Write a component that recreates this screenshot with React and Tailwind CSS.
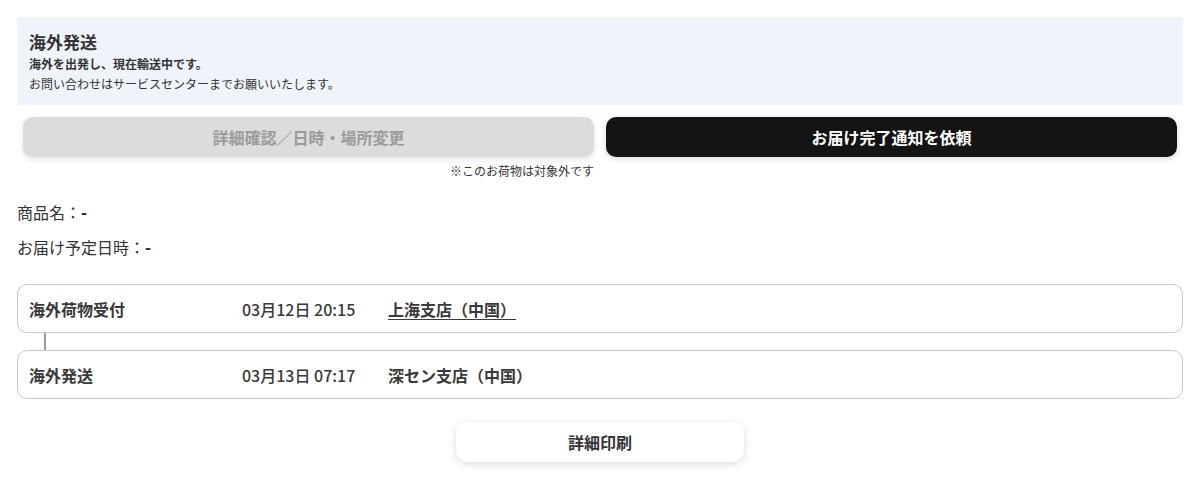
const font = { fontFamily: '"Noto Sans CJK JP", "Noto Sans", sans-serif' };

const events = [
    { label: "海外荷物受付", time: "03月12日 20:15", place: "上海支店（中国）", link: true },
    { label: "海外発送", time: "03月13日 07:17", place: "深セン支店（中国）", link: false },
];

const App = () => {
    return (
        <div className="w-[1200px] bg-white px-[17px] pt-[17px] text-[#333]" style={font}>
            <div className="bg-[#eff3fa] px-[12px] pt-[14px] pb-[12px]">
                <h2 className="text-[17px] font-bold leading-[22px]">海外発送</h2>
                <p className="mt-[2px] text-[12px] font-bold leading-[18px]">海外を出発し、現在輸送中です。</p>
                <p className="mt-[2px] text-[12px] leading-[18px]">お問い合わせはサービスセンターまでお願いいたします。</p>
            </div>

            <div className="mt-[12px] grid grid-cols-2 gap-[12px] px-[6px]">
                <div className="flex flex-col items-end">
                    <button className="h-[40px] w-full rounded-[10px] bg-[#dcdcdc] text-[16px] font-bold text-[#9b9b9b] shadow-[0_2px_6px_rgba(0,0,0,0.12)]">
                        詳細確認／日時・場所変更
                    </button>
                    <span className="mt-[6px] text-[12px] leading-[16px] text-[#333]">※このお荷物は対象外です</span>
                </div>
                <div>
                    <button className="h-[40px] w-full rounded-[10px] bg-[#141414] text-[16px] font-bold text-white shadow-[0_2px_6px_rgba(0,0,0,0.15)]">
                        お届け完了通知を依頼
                    </button>
                </div>
            </div>

            <div className="mt-[22px] flex flex-col gap-[13px] text-[16px] leading-[22px]">
                <p>商品名：<span className="font-black">-</span></p>
                <p>お届け予定日時：<span className="font-black">-</span></p>
            </div>

            <div className="mt-[26px] flex flex-col">
                {events.map((e, i) => (
                    <div key={i} className="flex flex-col">
                        {i > 0 && <div className="ml-[27px] h-[17px] w-[2px] bg-[#9a9a9a]" />}
                        <div className="flex h-[49px] items-center rounded-[10px] border border-[#c8c8c8] px-[11px] text-[16px] font-bold text-[#3a3a3a]">
                            <span className="w-[213px]">{e.label}</span>
                            <span className="w-[146px] font-medium">{e.time}</span>
                            <span className={e.link ? "underline underline-offset-[3px]" : ""}>{e.place}</span>
                        </div>
                    </div>
                ))}
            </div>

            <div className="mt-[23px] flex justify-center pb-[21px]">
                <button className="h-[40px] w-[288px] rounded-[12px] bg-white text-[16px] font-bold text-[#333] shadow-[0_2px_8px_rgba(0,0,0,0.15)]">
                    詳細印刷
                </button>
            </div>
        </div>
    );
};

export default App;
